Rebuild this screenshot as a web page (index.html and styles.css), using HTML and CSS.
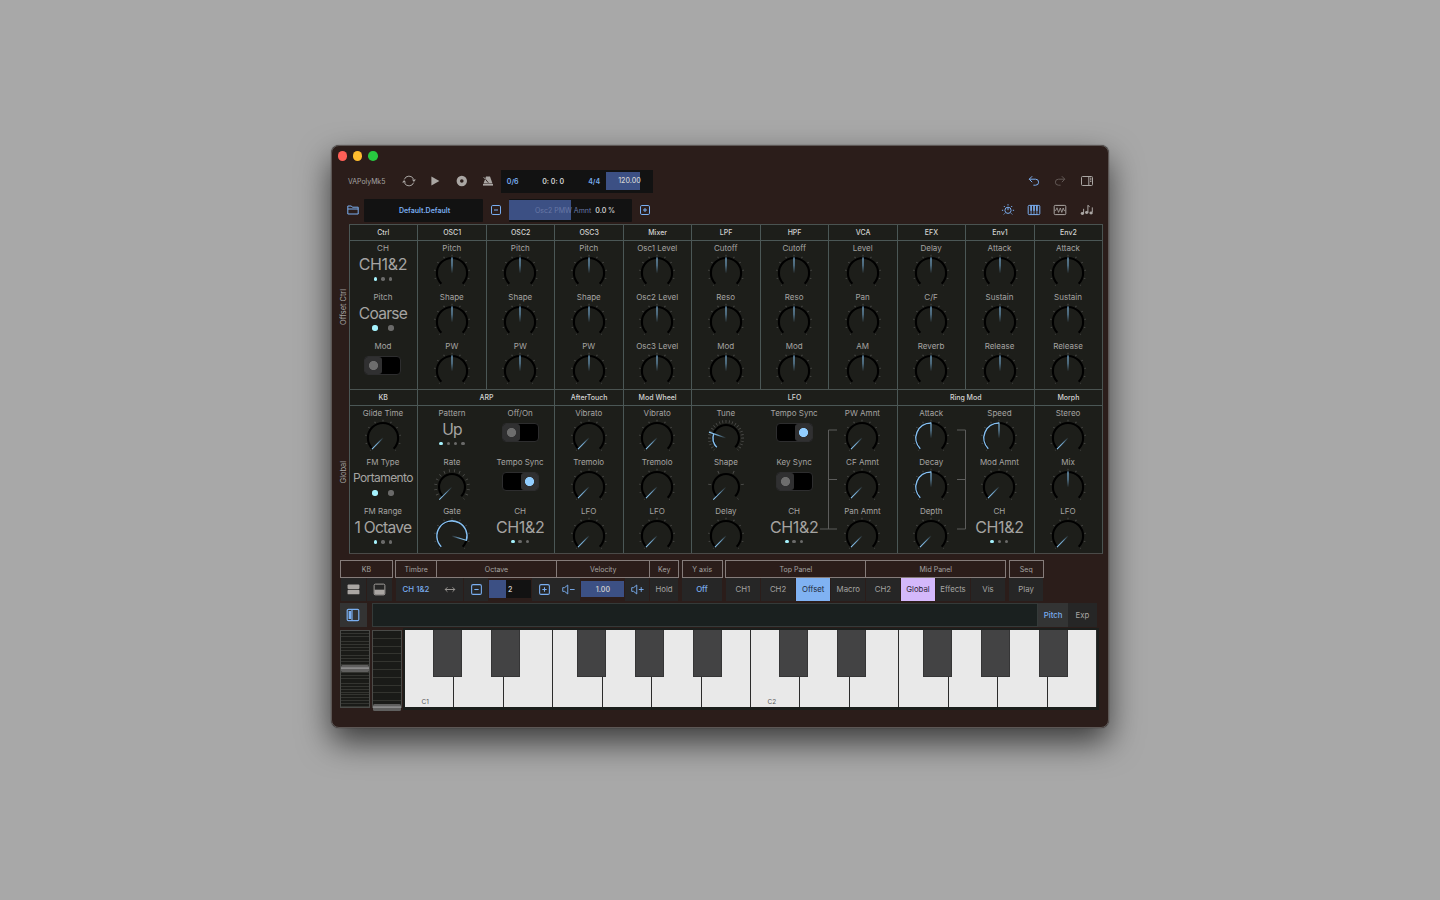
FILE: index.html
```html
<!DOCTYPE html>
<html lang="en">
<head>
  <meta charset="UTF-8">
  <meta name="viewport" content="width=device-width, initial-scale=1.0">
  <title>VAPolyMk5</title>
  <link rel="stylesheet" href="styles.css">
</head>
<body>
  <!-- shared knob shapes -->
  <svg class="defs" width="0" height="0">
    <defs>
      <linearGradient id="needle" x1="0" y1="0" x2="0" y2="1">
        <stop offset="0" stop-color="#8fcaf5"/>
        <stop offset="0.5" stop-color="#6fa3c9"/>
        <stop offset="1" stop-color="#6fa3c9" stop-opacity="0"/>
      </linearGradient>
      <symbol id="dial" viewBox="-20 -20 40 40">
        <path class="ticks" d="M-12.3 12.3A17.4 17.4 0 1 1 12.3 12.3" pathLength="270"/>
        <path class="track" d="M-10.7 10.7A15.1 15.1 0 1 1 10.7 10.7"/>
      </symbol>
      <symbol id="hand" viewBox="-20 -20 40 40">
        <rect x="-0.55" y="-15.6" width="1.1" height="16" fill="url(#needle)"/>
      </symbol>
      <symbol id="mid" viewBox="-20 -20 40 40">
        <use href="#dial" x="-20" y="-20" width="40" height="40"/>
        <use href="#hand" x="-20" y="-20" width="40" height="40"/>
      </symbol>
      <symbol id="min" viewBox="-20 -20 40 40">
        <use href="#dial" x="-20" y="-20" width="40" height="40"/>
        <use href="#hand" x="-20" y="-20" width="40" height="40" transform="rotate(-135)"/>
      </symbol>
      <symbol id="half" viewBox="-20 -20 40 40">
        <use href="#dial" x="-20" y="-20" width="40" height="40"/>
        <path class="value" d="M-10.7 10.7A15.1 15.1 0 0 1 0 -15.1"/>
        <use href="#hand" x="-20" y="-20" width="40" height="40"/>
      </symbol>
      <symbol id="gate" viewBox="-20 -20 40 40">
        <use href="#dial" x="-20" y="-20" width="40" height="40"/>
        <path class="value" d="M-10.7 10.7A15.1 15.1 0 1 1 14.4 4.4"/>
        <use href="#hand" x="-20" y="-20" width="40" height="40" transform="rotate(107)"/>
      </symbol>
      <symbol id="tune" viewBox="-20 -20 40 40">
        <path class="ticks-long t24" d="M-11.7 11.7A16.5 16.5 0 1 1 11.7 11.7" pathLength="270"/>
        <path class="track" d="M-9.2 9.2A13 13 0 1 1 9.2 9.2"/>
        <path class="value" d="M-9.2 9.2A13 13 0 0 1 -12.3 -4.2"/>
        <rect x="-0.6" y="-18" width="1.2" height="18" fill="url(#needle)" transform="rotate(-71)"/>
      </symbol>
      <symbol id="rate" viewBox="-20 -20 40 40">
        <path class="ticks-long t15" d="M-11.7 11.7A16.5 16.5 0 1 1 11.7 11.7" pathLength="270"/>
        <path class="track" d="M-9.2 9.2A13 13 0 1 1 9.2 9.2"/>
        <rect x="-0.5" y="-18" width="1" height="18" fill="url(#needle)" transform="rotate(-135)"/>
      </symbol>
      <symbol id="shape" viewBox="-20 -20 40 40">
        <path class="ticks-long t5" d="M-11.7 11.7A16.5 16.5 0 1 1 11.7 11.7" pathLength="270"/>
        <path class="track" d="M-9.2 9.2A13 13 0 1 1 9.2 9.2"/>
        <rect x="-0.5" y="-18" width="1" height="18" fill="url(#needle)" transform="rotate(-135)"/>
      </symbol>
      <symbol id="minus" viewBox="0 0 12 12">
        <rect x="1.5" y="1.5" width="9" height="9" rx="1.3"/><path d="M4 6h4"/>
      </symbol>
      <symbol id="plus" viewBox="0 0 12 12">
        <rect x="1.5" y="1.5" width="9" height="9" rx="1.3"/><path d="M4 6h4M6 4v4"/>
      </symbol>
    </defs>
  </svg>

  <div class="window">
    <div class="titlebar">
      <span class="light red"></span><span class="light yellow"></span><span class="light green"></span>
    </div>

    <div class="toolbar transport">
      <span class="app-name">VAPolyMk5</span>
      <svg class="icon" viewBox="0 0 14 14"><path d="M2.3 5.4A5 5 0 0 1 11.6 5.2M11.7 8.6A5 5 0 0 1 2.4 8.8"/><path class="solid" d="M9.9 5.4h4l-2 2.6zM.1 8.6h4L2.1 6z"/></svg>
      <svg class="icon" viewBox="0 0 14 14"><path class="solid" d="M3.4 2.4v9.2L11.4 7z"/></svg>
      <svg class="icon" viewBox="0 0 14 14"><circle cx="6.8" cy="7" r="3.5" stroke-width="3.4"/></svg>
      <svg class="icon" viewBox="0 0 14 14"><path class="solid" d="M5 2.5h4l2.5 7h-9z"/><path class="solid" d="M2 10h10v1.6H2z"/><path class="cut" d="M7.3 8.7 3 3.5"/><path d="M4.4 5.3 2.5 3" stroke-width=".8"/></svg>
      <div class="display">
        <span class="blue pos">0/6</span>
        <span class="time">0: 0: 0</span>
        <span class="blue sig">4/4</span>
        <span class="tempo">120.00</span>
      </div>
      <div class="right">
        <svg class="icon blue" viewBox="0 0 14 14"><path d="M5.2 2.2 2.2 5.2l3 3M2.4 5.2h6.2a3 3 0 0 1 0 6H6.4"/></svg>
        <svg class="icon dim" viewBox="0 0 14 14"><path d="M8.8 2.2l3 3-3 3M11.6 5.2H5.4a3 3 0 0 0 0 6h2.2"/></svg>
        <svg class="icon" viewBox="0 0 14 14"><rect x="1.5" y="2.5" width="11" height="9" rx="1"/><path d="M8.8 2.5v9M10 4.2h1.4M10 5.8h1.4M10 7.4h1.4"/></svg>
      </div>
    </div>

    <div class="toolbar preset">
      <svg class="icon blue folder" viewBox="0 0 14 14"><path d="M1.8 11V3h3.6l1 1.2h5.8V11zM1.8 6h10.4"/></svg>
      <div class="preset-name blue">Default.Default</div>
      <svg class="icon blue step" viewBox="0 0 12 12"><use href="#minus"/></svg>
      <div class="param"><span class="param-name">Osc2 PMW Amnt</span><span>0.0 %</span></div>
      <svg class="icon blue step" viewBox="0 0 12 12"><use href="#plus"/></svg>
      <div class="right">
        <svg class="icon blue" viewBox="0 0 14 14"><circle cx="7" cy="7.3" r="3.1"/><path d="M7 4.2v3M7 1.2v1.3M2.8 3l1 1M11.2 3l-1 1M.9 7.3h1.3M11.8 7.3h1.3M2.8 11.4l1-1M11.2 11.4l-1-1"/></svg>
        <svg class="icon blue" viewBox="0 0 14 14"><rect x="1.2" y="2.4" width="11.6" height="9.2" rx="1"/><path d="M4.1 7v4.6M7 7v4.6M9.9 7v4.6" stroke-width=".8"/><path d="M4.1 2.5v5.2M7 2.5v5.2M9.9 2.5v5.2" stroke-width="1.7"/></svg>
        <svg class="icon" viewBox="0 0 14 14"><rect x="1.2" y="2.4" width="11.6" height="9.2" rx="1"/><path d="M1.8 7.4h1L4 4.8l1.6 4.6L7.3 5l1.5 4.4L10.2 5l1 2.6h1" stroke-width=".8"/></svg>
        <svg class="icon" viewBox="0 0 14 14"><path d="M3.6 10V5.8M7.9 9.4V2.2M7.9 2.4l1.8 1.4M12.3 9V4.4"/><g class="solid"><ellipse cx="2.4" cy="10.5" rx="1.7" ry="1.4"/><ellipse cx="6.7" cy="9.5" rx="1.7" ry="1.4"/><ellipse cx="11.1" cy="10" rx="1.7" ry="1.4"/></g></svg>
      </div>
    </div>

    <div class="panel-row offset">
      <div class="side"><span>Offset Ctrl</span></div>
      <div class="modules">
        <section class="module">
          <h2>Ctrl</h2>
          <div class="cells">
            <div class="cell"><label>CH</label><b class="pick">CH1&amp;2</b><i class="dots"><u class="on"></u><u></u><u></u></i></div>
            <div class="cell"><label>Pitch</label><b class="pick tight">Coarse</b><i class="dots two"><u class="on"></u><u></u></i></div>
            <div class="cell"><label>Mod</label><span class="switch"></span></div>
          </div>
        </section>
        <section class="module">
          <h2>OSC1</h2>
          <div class="cells">
            <div class="cell"><label>Pitch</label><svg class="knob"><use href="#mid"/></svg></div>
            <div class="cell"><label>Shape</label><svg class="knob"><use href="#mid"/></svg></div>
            <div class="cell"><label>PW</label><svg class="knob"><use href="#mid"/></svg></div>
          </div>
        </section>
        <section class="module">
          <h2>OSC2</h2>
          <div class="cells">
            <div class="cell"><label>Pitch</label><svg class="knob"><use href="#mid"/></svg></div>
            <div class="cell"><label>Shape</label><svg class="knob"><use href="#mid"/></svg></div>
            <div class="cell"><label>PW</label><svg class="knob"><use href="#mid"/></svg></div>
          </div>
        </section>
        <section class="module">
          <h2>OSC3</h2>
          <div class="cells">
            <div class="cell"><label>Pitch</label><svg class="knob"><use href="#mid"/></svg></div>
            <div class="cell"><label>Shape</label><svg class="knob"><use href="#mid"/></svg></div>
            <div class="cell"><label>PW</label><svg class="knob"><use href="#mid"/></svg></div>
          </div>
        </section>
        <section class="module">
          <h2>Mixer</h2>
          <div class="cells">
            <div class="cell"><label>Osc1 Level</label><svg class="knob"><use href="#mid"/></svg></div>
            <div class="cell"><label>Osc2 Level</label><svg class="knob"><use href="#mid"/></svg></div>
            <div class="cell"><label>Osc3 Level</label><svg class="knob"><use href="#mid"/></svg></div>
          </div>
        </section>
        <section class="module">
          <h2>LPF</h2>
          <div class="cells">
            <div class="cell"><label>Cutoff</label><svg class="knob"><use href="#mid"/></svg></div>
            <div class="cell"><label>Reso</label><svg class="knob"><use href="#mid"/></svg></div>
            <div class="cell"><label>Mod</label><svg class="knob"><use href="#mid"/></svg></div>
          </div>
        </section>
        <section class="module">
          <h2>HPF</h2>
          <div class="cells">
            <div class="cell"><label>Cutoff</label><svg class="knob"><use href="#mid"/></svg></div>
            <div class="cell"><label>Reso</label><svg class="knob"><use href="#mid"/></svg></div>
            <div class="cell"><label>Mod</label><svg class="knob"><use href="#mid"/></svg></div>
          </div>
        </section>
        <section class="module">
          <h2>VCA</h2>
          <div class="cells">
            <div class="cell"><label>Level</label><svg class="knob"><use href="#mid"/></svg></div>
            <div class="cell"><label>Pan</label><svg class="knob"><use href="#mid"/></svg></div>
            <div class="cell"><label>AM</label><svg class="knob"><use href="#mid"/></svg></div>
          </div>
        </section>
        <section class="module">
          <h2>EFX</h2>
          <div class="cells">
            <div class="cell"><label>Delay</label><svg class="knob"><use href="#mid"/></svg></div>
            <div class="cell"><label>C/F</label><svg class="knob"><use href="#mid"/></svg></div>
            <div class="cell"><label>Reverb</label><svg class="knob"><use href="#mid"/></svg></div>
          </div>
        </section>
        <section class="module">
          <h2>Env1</h2>
          <div class="cells">
            <div class="cell"><label>Attack</label><svg class="knob"><use href="#mid"/></svg></div>
            <div class="cell"><label>Sustain</label><svg class="knob"><use href="#mid"/></svg></div>
            <div class="cell"><label>Release</label><svg class="knob"><use href="#mid"/></svg></div>
          </div>
        </section>
        <section class="module">
          <h2>Env2</h2>
          <div class="cells">
            <div class="cell"><label>Attack</label><svg class="knob"><use href="#mid"/></svg></div>
            <div class="cell"><label>Sustain</label><svg class="knob"><use href="#mid"/></svg></div>
            <div class="cell"><label>Release</label><svg class="knob"><use href="#mid"/></svg></div>
          </div>
        </section>
      </div>
    </div>

    <div class="panel-row global">
      <div class="side"><span>Global</span></div>
      <div class="modules">
        <section class="module">
          <h2>KB</h2>
          <div class="cells">
            <div class="cell"><label>Glide Time</label><svg class="knob"><use href="#min"/></svg></div>
            <div class="cell"><label>FM Type</label><b class="pick small">Portamento</b><i class="dots two"><u class="on"></u><u></u></i></div>
            <div class="cell"><label>FM Range</label><b class="pick tight">1 Octave</b><i class="dots"><u class="on"></u><u></u><u></u></i></div>
          </div>
        </section>
        <section class="module span2">
          <h2>ARP</h2>
          <div class="cells">
            <div class="cell"><label>Pattern</label><b class="pick tight">Up</b><i class="dots"><u class="on"></u><u></u><u></u><u></u></i></div>
            <div class="cell"><label>Rate</label><svg class="knob"><use href="#rate"/></svg></div>
            <div class="cell"><label>Gate</label><svg class="knob"><use href="#gate"/></svg></div>
            <div class="cell"><label>Off/On</label><span class="switch"></span></div>
            <div class="cell"><label>Tempo Sync</label><span class="switch active"></span></div>
            <div class="cell"><label>CH</label><b class="pick">CH1&amp;2</b><i class="dots"><u class="on"></u><u></u><u></u></i></div>
          </div>
        </section>
        <section class="module">
          <h2>AfterTouch</h2>
          <div class="cells">
            <div class="cell"><label>Vibrato</label><svg class="knob"><use href="#min"/></svg></div>
            <div class="cell"><label>Tremolo</label><svg class="knob"><use href="#min"/></svg></div>
            <div class="cell"><label>LFO</label><svg class="knob"><use href="#min"/></svg></div>
          </div>
        </section>
        <section class="module">
          <h2>Mod Wheel</h2>
          <div class="cells">
            <div class="cell"><label>Vibrato</label><svg class="knob"><use href="#min"/></svg></div>
            <div class="cell"><label>Tremolo</label><svg class="knob"><use href="#min"/></svg></div>
            <div class="cell"><label>LFO</label><svg class="knob"><use href="#min"/></svg></div>
          </div>
        </section>
        <section class="module span3">
          <h2>LFO</h2>
          <div class="cells">
            <div class="cell"><label>Tune</label><svg class="knob"><use href="#tune"/></svg></div>
            <div class="cell"><label>Shape</label><svg class="knob"><use href="#shape"/></svg></div>
            <div class="cell"><label>Delay</label><svg class="knob"><use href="#min"/></svg></div>
            <div class="cell"><label>Tempo Sync</label><span class="switch active"></span></div>
            <div class="cell"><label>Key Sync</label><span class="switch"></span></div>
            <div class="cell"><label>CH</label><b class="pick">CH1&amp;2</b><i class="dots"><u class="on"></u><u></u><u></u></i></div>
            <div class="cell"><label>PW Amnt</label><svg class="knob"><use href="#min"/></svg></div>
            <div class="cell"><label>CF Amnt</label><svg class="knob"><use href="#min"/></svg></div>
            <div class="cell"><label>Pan Amnt</label><svg class="knob"><use href="#min"/></svg></div>
          </div>
          <svg class="wires lfo-wires" viewBox="0 0 18 101"><path d="M17 1H8.5V100M8.5 50.5H17M0 100h17"/></svg>
        </section>
        <section class="module span2">
          <h2>Ring Mod</h2>
          <div class="cells">
            <div class="cell"><label>Attack</label><svg class="knob"><use href="#half"/></svg></div>
            <div class="cell"><label>Decay</label><svg class="knob"><use href="#half"/></svg></div>
            <div class="cell"><label>Depth</label><svg class="knob"><use href="#min"/></svg></div>
            <div class="cell"><label>Speed</label><svg class="knob"><use href="#half"/></svg></div>
            <div class="cell"><label>Mod Amnt</label><svg class="knob"><use href="#min"/></svg></div>
            <div class="cell"><label>CH</label><b class="pick">CH1&amp;2</b><i class="dots"><u class="on"></u><u></u><u></u></i></div>
          </div>
          <svg class="wires ring-wires" viewBox="0 0 18 101"><path d="M0 1H8.5V100H0M8.5 50.5H0"/></svg>
        </section>
        <section class="module">
          <h2>Morph</h2>
          <div class="cells">
            <div class="cell"><label>Stereo</label><svg class="knob"><use href="#min"/></svg></div>
            <div class="cell"><label>Mix</label><svg class="knob"><use href="#mid"/></svg></div>
            <div class="cell"><label>LFO</label><svg class="knob"><use href="#min"/></svg></div>
          </div>
        </section>
      </div>
    </div>

    <div class="controls">
      <div class="group g-kb">
        <h3>KB</h3>
        <div class="buttons">
          <button><svg class="icon" viewBox="0 0 14 14"><g class="solid"><rect x=".6" y="1.6" width="12.8" height="4.9" rx="1"/><rect x=".6" y="7.3" width="12.8" height="4.9" rx="1"/></g></svg></button>
          <button><svg class="icon" viewBox="0 0 14 14"><rect x="1.2" y="1.2" width="11.6" height="11.6" rx="1.4"/><path class="solid" d="M1.6 7.2h10.8v5.2H1.6z"/></svg></button>
        </div>
      </div>
      <div class="group g-timbre">
        <h3>Timbre</h3>
        <div class="buttons"><button class="blue">CH 1&amp;2</button></div>
      </div>
      <div class="group g-octave">
        <h3>Octave</h3>
        <div class="buttons">
          <button class="arrow"><svg class="icon small" viewBox="0 0 14 14"><path d="M1.6 7h10.8M4 4.4 1.4 7 4 9.6M10 4.4 12.6 7 10 9.6"/></svg></button>
          <button><svg class="icon blue" viewBox="0 0 12 12"><use href="#minus"/></svg></button>
          <div class="slot octave"><span>2</span></div>
          <button><svg class="icon blue" viewBox="0 0 12 12"><use href="#plus"/></svg></button>
        </div>
      </div>
      <div class="group g-velocity">
        <h3>Velocity</h3>
        <div class="buttons">
          <button><svg class="icon blue" viewBox="0 0 14 14"><path d="M.8 5v4h2l3.4 2.8V2.2L2.8 5zM8.6 7h5"/></svg></button>
          <div class="slot velocity">1.00</div>
          <button><svg class="icon blue" viewBox="0 0 14 14"><path d="M.8 5v4h2l3.4 2.8V2.2L2.8 5zM8.4 7h5.2M11 4.4v5.2"/></svg></button>
        </div>
      </div>
      <div class="group g-key">
        <h3>Key</h3>
        <div class="buttons"><button>Hold</button></div>
      </div>
      <div class="group g-axis">
        <h3>Y axis</h3>
        <div class="buttons"><button class="blue">Off</button></div>
      </div>
      <div class="group g-top">
        <h3>Top Panel</h3>
        <div class="buttons"><button>CH1</button><button>CH2</button><button class="sel-blue">Offset</button><button>Macro</button></div>
      </div>
      <div class="group g-mid">
        <h3>Mid Panel</h3>
        <div class="buttons"><button>CH2</button><button class="sel-purple">Global</button><button>Effects</button><button>Vis</button></div>
      </div>
      <div class="group g-seq">
        <h3>Seq</h3>
        <div class="buttons"><button>Play</button></div>
      </div>
    </div>

    <div class="keyboard">
      <div class="ribbon-row">
        <button class="side-toggle"><svg class="icon blue" viewBox="0 0 14 14"><rect x="1.2" y="1.4" width="11.6" height="11.2" rx="1.2" stroke-width="1.2"/><path class="solid" d="M2.6 3h2.6v8H2.6z"/><path d="M6 1.4v11.2" stroke-width="1.2"/></svg></button>
        <div class="ribbon"></div>
        <button class="tab active">Pitch</button>
        <button class="tab">Exp</button>
      </div>
      <div class="keys-row">
        <div class="wheel pitch"><span></span></div>
        <div class="wheel mod"><span></span></div>
        <div class="keys">
          <div class="white-keys">
            <span>C1</span><span></span><span></span><span></span><span></span><span></span><span></span>
            <span>C2</span><span></span><span></span><span></span><span></span><span></span><span></span>
          </div>
          <div class="black-keys">
            <span class="k2"></span><span class="k4"></span><span class="k7"></span><span class="k9"></span><span class="k11"></span>
            <span class="k14"></span><span class="k16"></span><span class="k19"></span><span class="k21"></span><span class="k23"></span>
          </div>
        </div>
      </div>
    </div>
  </div>
</body>
</html>
```
FILE: styles.css
```css
* {
  box-sizing: border-box;
}
body {
  margin: 0;
  height: 100vh;
  overflow: hidden;
  background-color: #a8a8a8;
  font-family: Inter, "Liberation Sans", sans-serif;
  font-size: 8px;
  color: #a5a4a2;
}
.defs {
  position: absolute;
}
h2, h3 {
  margin: 0;
  font-weight: 500;
}
button {
  border: none;
  padding: 0;
  font: inherit;
  color: #a5a4a2;
  background: #262626;
  display: flex;
  align-items: center;
  justify-content: center;
}
.window {
  width: 778px;
  height: 583px;
  margin: 145px 0 0 331px;
  background: #2b1d1a;
  border: 1px solid #5d5755;
  border-radius: 8px;
  box-shadow: 0 0 1px rgba(0, 0, 0, 0.7), 0 14px 32px rgba(0, 0, 0, 0.65);
}

/* title bar and tool bars */
.titlebar {
  display: flex;
  gap: 5.6px;
  height: 23px;
  padding: 5px 0 0 5.7px;
}
.light {
  width: 9.6px;
  height: 9.6px;
  border-radius: 50%;
}
.red { background: #ff5f57; }
.yellow { background: #febc2e; }
.green { background: #28c840; }
.toolbar {
  display: flex;
  align-items: center;
  height: 24px;
  padding-right: 14.5px;
  font-size: 7px;
  font-weight: 600;
}
.transport {
  padding-left: 16px;
}
.app-name {
  width: 53.9px;
  font-size: 6.9px;
  font-weight: 400;
}
.icon {
  width: 14px;
  height: 14px;
  flex: none;
  fill: none;
  stroke: #aaa6a3;
  color: #aaa6a3;
  stroke-width: 1;
  overflow: visible;
}
.icon .solid {
  fill: currentColor;
  stroke: none;
}
.icon .cut {
  stroke: #2b1d1a;
  stroke-width: 0.9;
}
.blue {
  color: #7aaef0;
}
.icon.blue {
  stroke: #7aaef0;
  color: #7aaef0;
}
.icon.dim {
  stroke: #625855;
}
.transport > .icon {
  margin-right: 12.4px;
}
.display {
  display: flex;
  align-items: center;
  width: 152px;
  height: 23px;
  margin-left: -6.3px;
  background: #121212;
  color: #d2d2d2;
}
.display .pos {
  width: 23px;
  text-align: center;
  color: #7aaef0;
}
.display .time {
  width: 58px;
  text-align: center;
}
.display .sig {
  width: 24px;
  text-align: center;
}
.tempo {
  width: 34px;
  height: 18px;
  line-height: 18.6px;
  text-indent: 12px;
  font-weight: 500;
  white-space: nowrap;
  background: #3c5084;
}
.right {
  display: flex;
  gap: 12.2px;
  margin-left: auto;
}
.preset {
  height: 24px;
  margin-top: 5px;
}
.folder {
  margin: 0 4px 0 14px;
}
.preset-name, .param {
  height: 23px;
  display: flex;
  align-items: center;
  justify-content: center;
  background: #121212;
  border-radius: 1px;
}
.preset-name {
  width: 119px;
  padding-left: 2px;
}
.icon.step {
  margin: 0 7px;
  width: 12px;
  height: 12px;
}
.param {
  width: 123px;
  gap: 4px;
  padding-left: 9px;
  color: #c8c8c8;
  background: linear-gradient(#3c5084, #3c5084) 0 50% / 62px 20px no-repeat #121212;
}
.param-name {
  font-weight: 400;
  color: #6878a6;
}

/* module panels */
.panel-row {
  display: flex;
}
.offset {
  height: 165px;
  margin-top: 2.3px;
}
.global {
  height: 165px;
}
.side {
  width: 17px;
  display: flex;
  align-items: center;
  justify-content: center;
  padding-left: 6px;
  font-size: 7.4px;
}
.side span {
  writing-mode: vertical-rl;
  transform: rotate(180deg);
}
.modules {
  display: grid;
  grid-template-columns: repeat(11, 68.48px);
  border-top: 1px solid #4a5351;
  border-right: 1px solid #4a5351;
  background: #1d1e1a;
}
.global .modules {
  border-bottom: 1px solid #4a4a48;
}
.module {
  position: relative;
  border-left: 1px solid #4b5756;
}
.module h2 {
  height: 15.9px;
  line-height: 15.6px;
  text-align: center;
  font-size: 7px;
  color: #d4d4d2;
  border-bottom: 1px solid #4b5756;
}
.module:first-child h2 {
  padding-right: 1px;
}
.span2 { grid-column: span 2; }
.span3 { grid-column: span 3; }
.cells {
  display: grid;
  grid-template-rows: repeat(3, 49px);
  grid-auto-columns: 1fr;
  grid-auto-flow: column;
  margin: 0 0.2px 0 -0.6px;
}
.module:first-child .cells {
  margin: 0 0.6px 0 -1px;
}
.global .cells {
  margin-top: -0.3px;
}
.cell {
  display: flex;
  flex-direction: column;
  align-items: center;
  white-space: nowrap;
}
.cell label {
  height: 12.3px;
  line-height: 14px;
}
.knob {
  width: 40px;
  height: 40px;
  flex: none;
}
.ticks {
  fill: none;
  stroke: #4c4c4a;
  stroke-width: 1.7;
  stroke-dasharray: 3 24;
  stroke-dashoffset: 1.5;
}
.ticks-long {
  fill: none;
  stroke: #50504e;
  stroke-width: 3;
}
.t24 {
  stroke-dasharray: 2.6 8.65;
  stroke-dashoffset: 1.3;
}
.t15 {
  stroke-dasharray: 2.6 15.4;
  stroke-dashoffset: 1.3;
}
.t5 {
  stroke-dasharray: 3 51;
  stroke-dashoffset: 1.5;
}
.track {
  fill: none;
  stroke: #000;
  stroke-width: 2.1;
}
.value {
  fill: none;
  stroke: #87c0f0;
  stroke-width: 1.5;
}
.pick {
  height: 20px;
  line-height: 22px;
  font-size: 16px;
  font-weight: 400;
  letter-spacing: -0.35px;
}
.pick.tight {
  font-size: 15.6px;
  line-height: 23px;
  letter-spacing: -0.75px;
}
.pick.small {
  font-size: 12px;
  letter-spacing: -0.6px;
}
.dots {
  display: flex;
  align-items: center;
  gap: 3.9px;
  height: 11px;
}
.dots u {
  width: 3.4px;
  height: 3.4px;
  border-radius: 50%;
  background: #6a6a69;
}
.dots.two {
  gap: 10.6px;
}
.dots.two u {
  width: 5.4px;
  height: 5.4px;
}
.dots .on {
  background: #a5f2fd;
}
.switch {
  display: flex;
  width: 37px;
  height: 19px;
  margin-top: 4.4px;
  border: 1px solid #2d2d2e;
  border-radius: 4px;
  background: #000;
}
.global .switch {
  margin-top: 5.2px;
}
.switch.active {
  justify-content: flex-end;
}
.switch::before {
  content: "";
  width: 17px;
  height: 17px;
  border-radius: 3px;
  background: radial-gradient(circle, #6d6d6d 4.2px, #303031 4.9px);
}
.switch.active::before {
  background: radial-gradient(circle, #92ceff 4.2px, #303031 4.9px);
}
.wires {
  position: absolute;
  top: 39.2px;
  width: 18px;
  height: 101px;
  fill: none;
  stroke: #5c5c5b;
  stroke-width: 1;
}
.lfo-wires { left: 128px; }
.ring-wires { left: 59px; }

/* control strip */
.controls {
  display: flex;
  margin: 5.6px 0 0 8px;
  height: 41px;
}
.group h3 {
  height: 18px;
  line-height: 17.4px;
  text-align: center;
  font-size: 7px;
  font-weight: 400;
  border: 1px solid #857c7a;
  margin-right: -1px;
}
.buttons {
  display: flex;
  align-items: center;
  gap: 1px;
  height: 23px;
  padding-left: 0.5px;
}
.buttons button {
  flex: 1 1 0;
  height: 22.5px;
  font-size: 7.8px;
}
.buttons .blue {
  color: #7aaef0;
  font-weight: 500;
}
.buttons .icon {
  width: 13px;
  height: 13px;
}
.buttons .icon.small {
  width: 12px;
}
.buttons .arrow {
  flex: 0 0 27px;
}
.g-kb { width: 52px; margin-right: 3.4px; }
.g-timbre { width: 40.6px; }
.g-octave { width: 120px; }
.g-velocity { width: 93.5px; }
.g-key { width: 28.5px; margin-right: 3.7px; }
.g-axis { width: 40px; margin-right: 3.7px; }
.g-top { width: 140px; }
.g-mid { width: 139.7px; margin-right: 3.5px; }
.g-seq { width: 34.5px; }
.buttons .sel-blue {
  background: #80b2f2;
  color: #1f2a3a;
}
.buttons .sel-purple {
  background: #d4b8fb;
  color: #2e2638;
}
.slot {
  height: 18px;
  flex: none;
  display: flex;
  align-items: center;
  justify-content: center;
  font-size: 7px;
  font-weight: 600;
  color: #c8c8c8;
}
.slot.octave {
  width: 42px;
  background: linear-gradient(to right, #3c5084 17px, #121212 17px);
}
.slot.velocity {
  width: 43px;
  height: 16px;
  background: #3c5084;
}

/* keyboard */
.keyboard {
  margin: 1.8px 11px 0 8px;
}
.ribbon-row {
  display: flex;
  height: 24px;
}
.side-toggle {
  width: 26.5px;
  height: 24px;
  margin-right: 5.5px;
  background: #333;
}
.ribbon {
  flex: 1;
  background: #1a201f;
  border: 1px solid #343a39;
}
.tab {
  width: 29.3px;
  font-size: 7.8px;
}
.tab.active {
  background: #333434;
  color: #7aaef0;
  font-weight: 500;
}
.keys-row {
  display: flex;
  height: 83px;
  padding-top: 3px;
}
.wheel {
  width: 30px;
  height: 78px;
  margin-right: 2px;
  border: 1px solid #4a4b48;
}
.wheel span {
  display: block;
  height: 7.5px;
  border-radius: 1.5px;
  background: linear-gradient(#5f5f5e 35%, #8a8a8a 36%, #8a8a8a 55%, #5f5f5e 56%);
}
.pitch {
  background: repeating-linear-gradient(#1a1b18 0 1.9px, #343531 1.9px 2.8px);
}
.pitch span {
  margin-top: 34px;
}
.mod {
  margin-right: 3px;
  background: repeating-linear-gradient(#1a1b18 0 6.8px, #33342f 6.8px 7.8px);
}
.mod span {
  margin-top: 73px;
}
.keys {
  flex: 1;
  position: relative;
  height: 78px;
  border-bottom: 1px solid #1b1e1c;
  box-shadow: 0 0 0 2px #1b1e1c;
}
.white-keys, .black-keys {
  display: grid;
}
.white-keys {
  grid-template-columns: repeat(14, 1fr);
  height: 77px;
  background: #e9e9e9;
}
.white-keys span {
  padding: 68px 0 0 16.5px;
  font-size: 6.5px;
  line-height: 8px;
  color: #5a5a5a;
  border-right: 1px solid #2c2c2c;
}
.black-keys {
  position: absolute;
  inset: 0 0.6px auto -0.6px;
  grid-template-columns: repeat(24, 1fr);
  grid-template-rows: 47px;
}
.black-keys span {
  background: #434344;
  border: 1px solid #353536;
  border-top: none;
}
.k2 { grid-column: 2; }
.k4 { grid-column: 4; }
.k7 { grid-column: 7; }
.k9 { grid-column: 9; }
.k11 { grid-column: 11; }
.k14 { grid-column: 14; }
.k16 { grid-column: 16; }
.k19 { grid-column: 19; }
.k21 { grid-column: 21; }
.k23 { grid-column: 23; }
```
